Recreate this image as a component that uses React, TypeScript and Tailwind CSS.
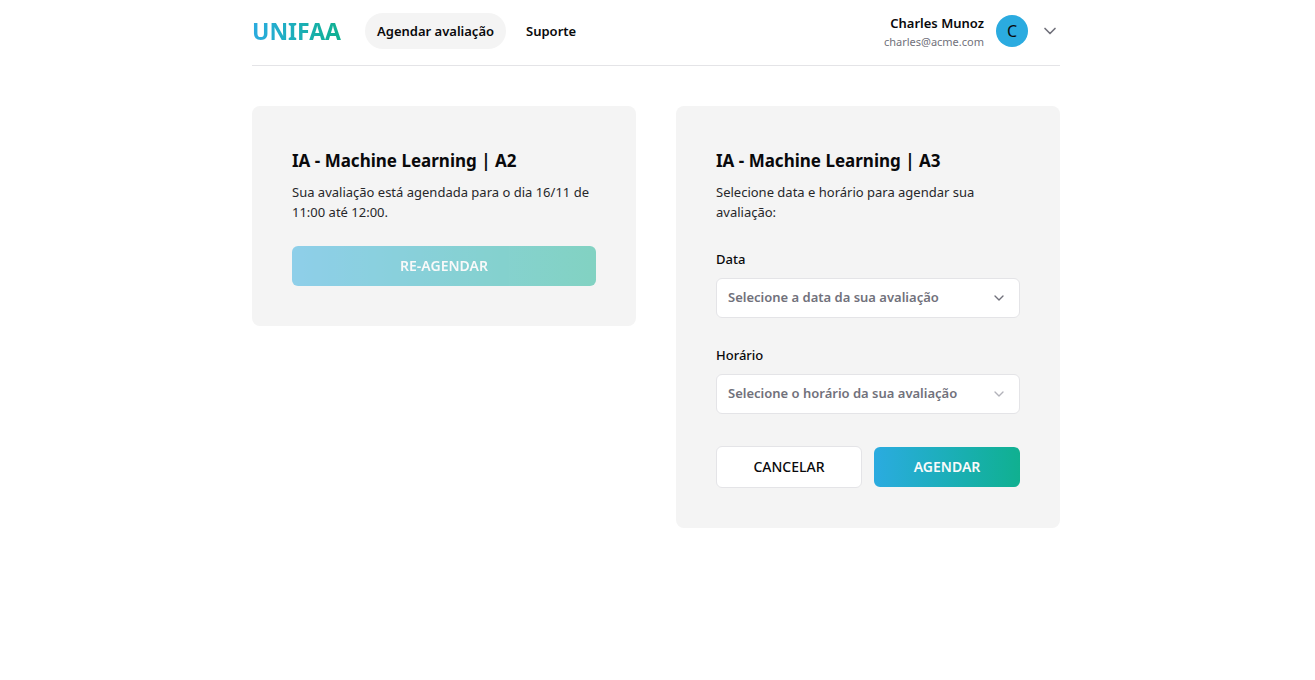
import { useId, type ReactNode } from "react";
import { ChevronDown } from "lucide-react";

function Header() {
  return (
    <header className="flex items-center justify-between border-b border-zinc-200 pt-3 pb-[15px]">
      <div className="flex items-center gap-6">
        <span className="bg-gradient-to-r from-[#2babe0] to-[#10b090] bg-clip-text text-[23px] leading-8 font-bold text-transparent">
          UNIFAA
        </span>
        <nav className="flex items-center gap-2 text-[13px] leading-5 font-semibold">
          <a href="#agendar" className="rounded-full bg-[#f4f4f4] px-3 py-2">
            Agendar avaliação
          </a>
          <a href="#suporte" className="rounded-full px-3 py-2">
            Suporte
          </a>
        </nav>
      </div>
      <div className="flex items-center gap-3">
        <div className="text-right">
          <p className="text-[13px] leading-[22px] font-semibold">Charles Munoz</p>
          <p className="text-[11px] leading-4 text-zinc-500">charles@acme.com</p>
        </div>
        <span className="flex size-8 items-center justify-center rounded-full bg-[#2babe0] text-base">
          C
        </span>
        <button type="button" aria-label="Abrir menu" className="text-zinc-500">
          <ChevronDown size={20} />
        </button>
      </div>
    </header>
  );
}

function Card({ title, text, children }: { title: string; text: string; children: ReactNode }) {
  return (
    <section className="rounded-lg bg-[#f4f4f4] p-10">
      <h2 className="text-[17px] leading-[30px] font-bold">{title}</h2>
      <p className="mt-1.5 text-[13px] leading-5 text-zinc-800">{text}</p>
      <div className="mt-6">{children}</div>
    </section>
  );
}

function SelectField({ label, placeholder, faded }: { label: string; placeholder: string; faded?: boolean }) {
  const id = useId();
  return (
    <div className="flex flex-col gap-1.5">
      <label htmlFor={id} className="text-[13px] leading-[26px] font-medium">
        {label}
      </label>
      <div className="relative">
        <select
          id={id}
          className="h-10 w-full appearance-none rounded-md border border-zinc-200 bg-white pr-10 pl-[11px] text-[13px] font-semibold text-zinc-500"
        >
          <option>{placeholder}</option>
        </select>
        <ChevronDown
          size={16}
          className={
            faded
              ? "pointer-events-none absolute top-3 right-[13px] text-zinc-400 opacity-80"
              : "pointer-events-none absolute top-3 right-[13px] text-zinc-500"
          }
        />
      </div>
    </div>
  );
}

export default function App() {
  return (
    <div className="min-h-screen bg-white pr-[3px] font-['Segoe_UI','Noto_Sans',sans-serif] text-zinc-950">
      <div className="mx-auto max-w-[808px]">
        <Header />
        <main className="mt-10 grid grid-cols-1 items-start gap-10 sm:grid-cols-2">
          <Card
            title="IA - Machine Learning | A2"
            text="Sua avaliação está agendada para o dia 16/11 de 11:00 até 12:00."
          >
            <button
              type="button"
              disabled
              className="h-10 w-full rounded-md bg-gradient-to-r from-[#2babe0] to-[#10b090] text-sm font-semibold text-white opacity-50"
            >
              RE-AGENDAR
            </button>
          </Card>
          <Card
            title="IA - Machine Learning | A3"
            text="Selecione data e horário para agendar sua avaliação:"
          >
            <form className="flex flex-col gap-6">
              <SelectField label="Data" placeholder="Selecione a data da sua avaliação" />
              <SelectField label="Horário" placeholder="Selecione o horário da sua avaliação" faded />
              <div className="mt-2 grid grid-cols-2 items-center gap-3 text-sm">
                <button
                  type="button"
                  className="h-[42px] rounded-md border border-zinc-200 bg-white font-medium"
                >
                  CANCELAR
                </button>
                <button
                  type="button"
                  className="h-10 rounded-md bg-gradient-to-r from-[#2babe0] to-[#10b090] font-semibold text-zinc-50"
                >
                  AGENDAR
                </button>
              </div>
            </form>
          </Card>
        </main>
      </div>
    </div>
  );
}
